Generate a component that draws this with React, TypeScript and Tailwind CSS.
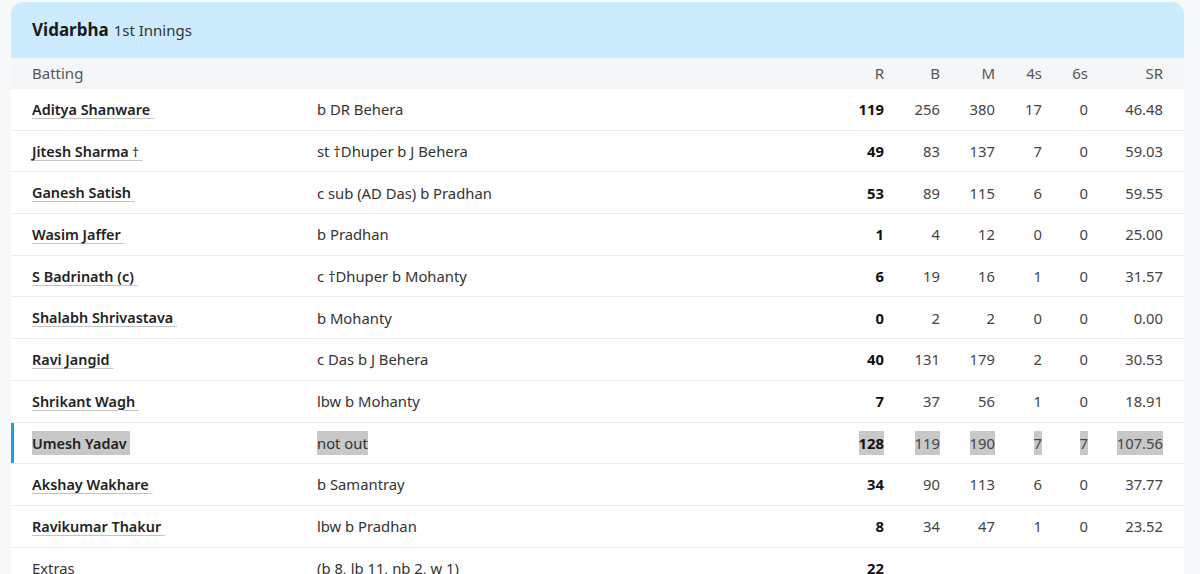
import React from "react";

type Batter = {
  name: string;
  mark?: string;
  dismissal: string;
  r: string;
  b: string;
  m: string;
  fours: string;
  sixes: string;
  sr: string;
  active?: boolean;
};

const batters: Batter[] = [
  { name: "Aditya Shanware", dismissal: "b DR Behera", r: "119", b: "256", m: "380", fours: "17", sixes: "0", sr: "46.48" },
  { name: "Jitesh Sharma", mark: "†", dismissal: "st †Dhuper b J Behera", r: "49", b: "83", m: "137", fours: "7", sixes: "0", sr: "59.03" },
  { name: "Ganesh Satish", dismissal: "c sub (AD Das) b Pradhan", r: "53", b: "89", m: "115", fours: "6", sixes: "0", sr: "59.55" },
  { name: "Wasim Jaffer", dismissal: "b Pradhan", r: "1", b: "4", m: "12", fours: "0", sixes: "0", sr: "25.00" },
  { name: "S Badrinath (c)", dismissal: "c †Dhuper b Mohanty", r: "6", b: "19", m: "16", fours: "1", sixes: "0", sr: "31.57" },
  { name: "Shalabh Shrivastava", dismissal: "b Mohanty", r: "0", b: "2", m: "2", fours: "0", sixes: "0", sr: "0.00" },
  { name: "Ravi Jangid", dismissal: "c Das b J Behera", r: "40", b: "131", m: "179", fours: "2", sixes: "0", sr: "30.53" },
  { name: "Shrikant Wagh", dismissal: "lbw b Mohanty", r: "7", b: "37", m: "56", fours: "1", sixes: "0", sr: "18.91" },
  { name: "Umesh Yadav", dismissal: "not out", r: "128", b: "119", m: "190", fours: "7", sixes: "7", sr: "107.56", active: true },
  { name: "Akshay Wakhare", dismissal: "b Samantray", r: "34", b: "90", m: "113", fours: "6", sixes: "0", sr: "37.77" },
  { name: "Ravikumar Thakur", dismissal: "lbw b Pradhan", r: "8", b: "34", m: "47", fours: "1", sixes: "0", sr: "23.52" },
];

// name | dismissal | R | B | M | 4s | 6s | SR
const grid =
  "grid grid-cols-[285px_1fr_60px_56px_55px_47px_46px_75px] items-center pl-[21px] pr-[21px]";

function Hl({ on, children }: { on?: boolean; children: React.ReactNode }) {
  return <span className={on ? "bg-[#c8c8c8] py-[2px]" : ""}>{children}</span>;
}

export default function App() {
  return (
    <div className="min-h-[574px] bg-[#f7f8fa] pl-[11px] pr-[16px] pt-[2px] font-['Segoe_UI','Noto_Sans',sans-serif] text-[14.8px] text-[#333]">
      <div className="overflow-hidden rounded-t-[12px] bg-white">
        <div className="flex h-[56px] items-center gap-[5px] bg-[#ccecfd] pl-[21px]">
          <span className="text-[17px] font-bold text-[#1a1a1a]">Vidarbha</span>
          <span className="mt-[1px] text-[15px] text-[#333]">1st Innings</span>
        </div>
        <div className={`${grid} h-[31px] bg-[#f5f6f7] text-[15px] text-[#555]`}>
          <span>Batting</span>
          <span />
          <span className="text-right">R</span>
          <span className="text-right">B</span>
          <span className="text-right">M</span>
          <span className="text-right">4s</span>
          <span className="text-right">6s</span>
          <span className="text-right">SR</span>
        </div>
        {batters.map((p) => (
          <div
            key={p.name}
            className={`${grid} relative h-[41.7px] border-b border-[#ececec]`}
          >
            {p.active && (
              <div className="absolute bottom-0 left-0 top-0 w-[3px] bg-[#1aa0e0]" />
            )}
            <span>
              <Hl on={p.active}>
                <span className="text-[14.4px] font-semibold text-[#222] underline decoration-[#c4c4c4] decoration-1 underline-offset-[3px]">
                  {p.name}
                  {p.mark && <span className="text-[13px] font-normal"> {p.mark}</span>}
                  {"\u00a0"}
                </span>
              </Hl>
            </span>
            <span>
              <Hl on={p.active}>{p.dismissal}</Hl>
            </span>
            <span className="text-right font-bold text-[#111]">
              <Hl on={p.active}>{p.r}</Hl>
            </span>
            <span className="text-right text-[#444]">
              <Hl on={p.active}>{p.b}</Hl>
            </span>
            <span className="text-right text-[#444]">
              <Hl on={p.active}>{p.m}</Hl>
            </span>
            <span className="text-right text-[#444]">
              <Hl on={p.active}>{p.fours}</Hl>
            </span>
            <span className="text-right text-[#444]">
              <Hl on={p.active}>{p.sixes}</Hl>
            </span>
            <span className="text-right text-[#444]">
              <Hl on={p.active}>{p.sr}</Hl>
            </span>
          </div>
        ))}
        <div className={`${grid} h-[41.7px]`}>
          <span className="text-[#333]">Extras</span>
          <span>(b 8, lb 11, nb 2, w 1)</span>
          <span className="text-right font-bold text-[#111]">22</span>
          <span />
          <span />
          <span />
          <span />
          <span />
        </div>
      </div>
    </div>
  );
}
